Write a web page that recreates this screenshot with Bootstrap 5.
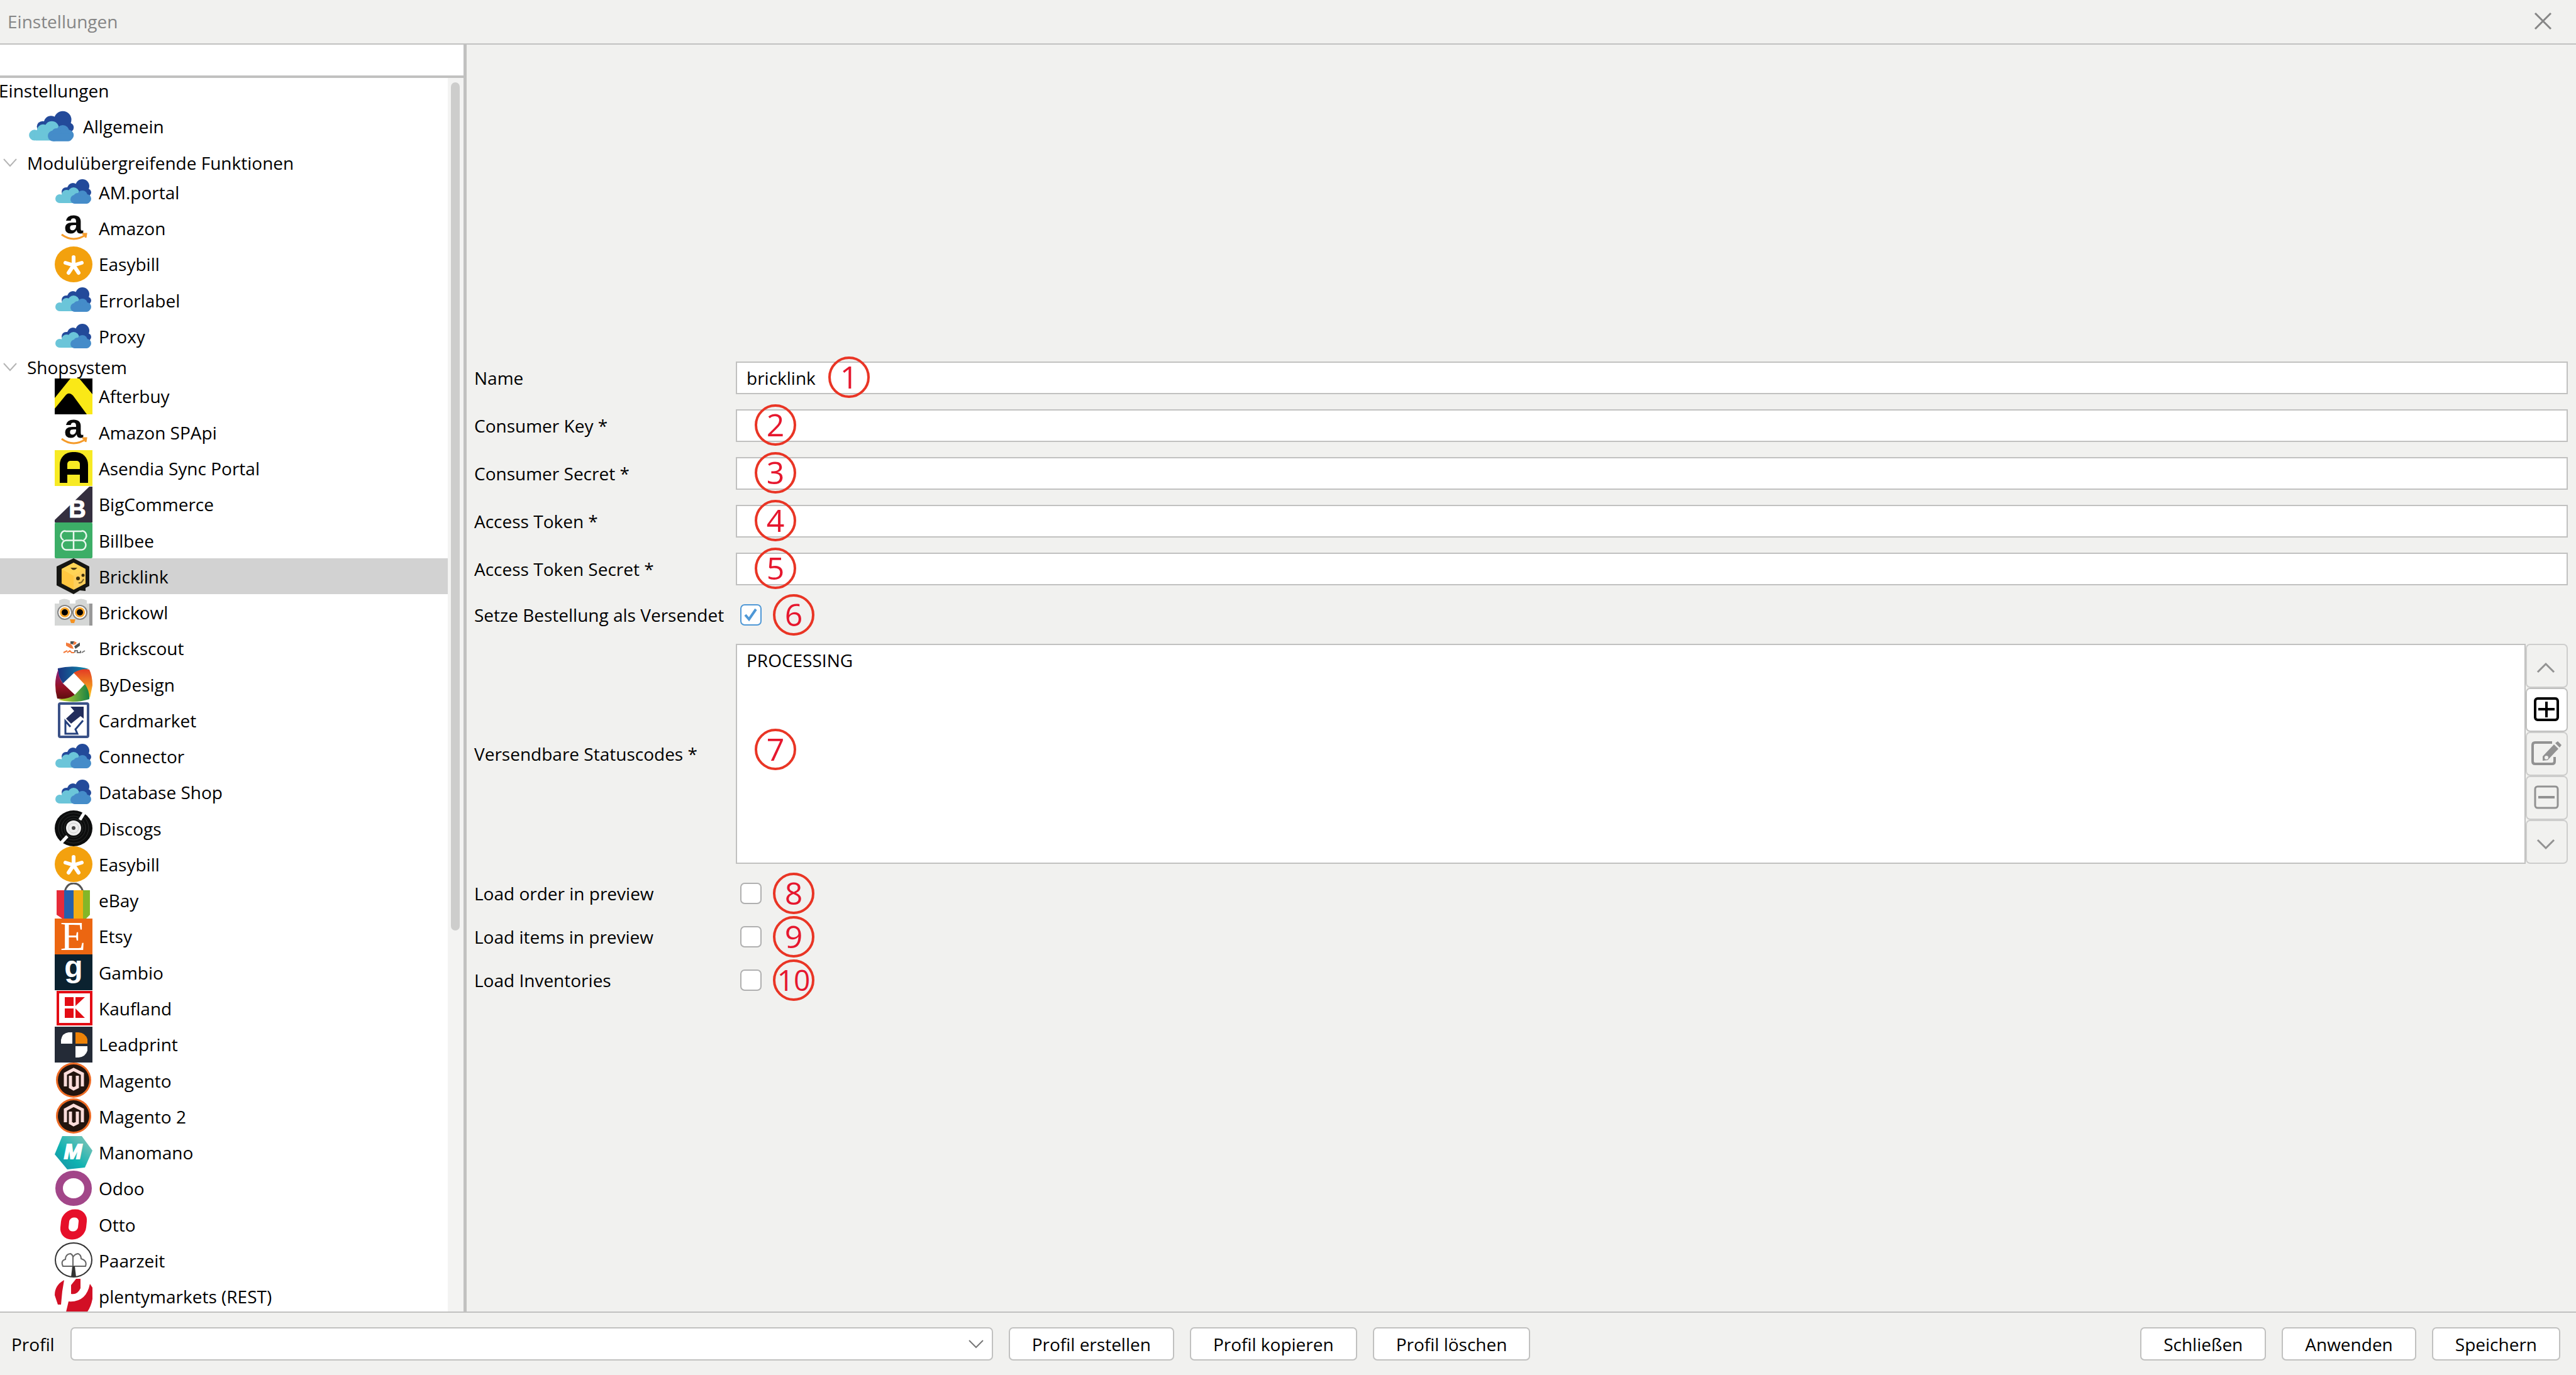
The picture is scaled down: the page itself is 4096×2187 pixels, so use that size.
<!DOCTYPE html>
<html lang="de">
<head>
<meta charset="utf-8">
<meta name="viewport" content="width=device-width, initial-scale=1">
<title>Einstellungen</title>
<link href="https://cdn.jsdelivr.net/npm/bootstrap@5.3.0/dist/css/bootstrap.min.css" rel="stylesheet">
<style>
:root{--line:#c1c1c0;--panel:#f1f1ef}
body{font-family:"Open Sans","Noto Sans",sans-serif;font-size:28px;line-height:36px;color:#000;background:var(--panel)}
.titlebar{height:71px;border-bottom:2px solid var(--line);padding:0 36px 0 12px;color:#868686}
.close-x{width:32px;height:32px;line-height:0}
.sidebar{width:742px;border-right:5px solid var(--line);background:#fff}
.search-box{height:53px;border:0;border-bottom:4px solid var(--line);border-radius:0;font-size:28px;background:#fff}
.tree a{color:#000;text-decoration:none;white-space:nowrap}
.tree ul{display:grid;grid-auto-rows:1fr}
.tree-root{height:39px;margin-left:-2px;padding-top:2px}
.tree-main{height:76px;padding-left:41px}
.tree-main svg{width:78px;height:57px;margin-right:13px}
.tree-group{height:38px;padding:2px 0 0 5px}
.tree-group svg{width:22px;height:22px;margin-right:16px}
.group-modules{height:287px}
.group-shops{height:1489px}
.tree-item{padding-left:87px}
.tree-item svg{width:60px;height:57px;margin-right:10px;flex:none}
.tree-item.selected{background:#d2d2d2}
.track{width:25px;background:#f3f3f2;padding:7px 6px 0 5px}
.thumb{height:69%;border-radius:7px;background:#cdcdcc}
.settings{padding:0 13px 0 12px;gap:24px}
.lbl{width:416px;flex:none}
.field{height:45px}
.box{height:52px;border:2px solid var(--line);border-radius:0;padding:0 15px;font-size:28px;line-height:36px;color:#000;background:#fff}
textarea.box{height:350px;padding:6px 15px;resize:none}
.form-check-input{width:34px;height:34px;margin:0 18px 0 7px;border:2px solid #b0b0b0;border-radius:4px;background-color:#fff;flex:none}
.form-check-input:checked{background-color:#fff;border-color:#4f98d6;background-size:100%;background-image:url("data:image/svg+xml,%3Csvg xmlns='http://www.w3.org/2000/svg' viewBox='0 0 30 30'%3E%3Cpath d='M6 15l6 7L23 6' fill='none' stroke='%234f98d6' stroke-width='4'/%3E%3C/svg%3E")}
.num{width:66px;height:66px;border:4px solid #e93525;border-radius:50%;color:#e6172e;font-size:50px;line-height:57px;text-align:center;flex:none;display:flex;justify-content:center}
.num-two{font-size:46px}
.num-over{position:absolute;left:30px;top:50%;margin-top:-34px}
.num-after{left:147px}
.num-tall{margin-top:-40px}
.side-btns{width:67px}
.side-btns .btn{flex:1;padding:0;border:2px solid #cdcdcc;border-radius:7px;color:#929292;line-height:0;opacity:1;background:transparent}
.side-btns .btn.active-add{background:#fff;border-color:var(--line);color:#000}
.side-btns svg{width:60px;height:50px}
.bottombar{height:101px;border-top:2px solid var(--line);padding:0 25px 0 18px;gap:25px}
.bottombar .btn{height:53px;padding:0 35px;border:2px solid var(--line);border-radius:7px;background:#fff;font-size:28px;line-height:36px;color:#000}
.profile-select{width:1467px;height:53px;border:2px solid var(--line);border-radius:7px;font-size:28px;background-color:#fff;background-size:26px 16px;background-position:right 12px center;background-image:url("data:image/svg+xml,%3Csvg xmlns='http://www.w3.org/2000/svg' viewBox='0 0 26 16'%3E%3Cpath d='M2 2l11 11L24 2' fill='none' stroke='%23777' stroke-width='2'/%3E%3C/svg%3E")}
</style>
<script src="https://cdn.jsdelivr.net/npm/bootstrap@5.3.0/dist/js/bootstrap.bundle.min.js"></script>
</head>
<body class="vh-100 d-flex flex-column overflow-hidden">

<svg class="d-none" aria-hidden="true">
  <symbol id="cloud" viewBox="0 0 60 57">
    <g fill="#234a9a"><circle cx="44" cy="19" r="11"/><circle cx="29" cy="23" r="9"/><circle cx="18" cy="28" r="7"/><circle cx="52" cy="29" r="6"/><rect x="18" y="21" width="36" height="14"/></g>
    <g fill="#6bc5d9"><circle cx="30" cy="30" r="9"/><circle cx="19" cy="33" r="8"/><circle cx="8" cy="39" r="7"/><rect x="8" y="33" width="24" height="13" rx="2"/></g>
    <g fill="#458cc9"><circle cx="44" cy="34" r="8"/><circle cx="51" cy="39" r="7"/><circle cx="32" cy="40" r="7"/><circle cx="36" cy="36" r="6"/><rect x="28" y="37" width="28" height="10" rx="5"/></g>
  </symbol>
  <symbol id="amazon" viewBox="0 0 60 57">
    <text x="30" y="37" text-anchor="middle" font-family="Liberation Sans" font-weight="700" font-size="54" fill="#0a0a0a">a</text>
    <path d="M11 39Q30 53 50 39M44 38l6 0-1 6" fill="none" stroke="#f59b2a" stroke-width="3"/>
  </symbol>
  <symbol id="easybill" viewBox="0 0 60 57">
    <ellipse cx="30" cy="28.500" rx="30" ry="28.500" fill="#f3a10e"/>
    <path d="M30 30V17M30 30l-13-4M30 30l13-4M30 30l-8 12M30 30l8 12" stroke="#fff" stroke-width="6" stroke-linecap="round"/>
  </symbol>
  <symbol id="magento" viewBox="0 0 60 57">
    <circle cx="30" cy="28" r="28" fill="#ec6a24"/><circle cx="30" cy="28" r="25" fill="#22140e"/>
    <path d="M17 38V18L30 11l14 7v20M25 21v18l5 3 6-3V21" fill="none" stroke="#fbdcda" stroke-width="5"/>
  </symbol>
  <symbol id="chev" viewBox="0 0 22 22"><path d="M1 5l10 11L21 5" fill="none" stroke="#b4b4b4" stroke-width="2"/></symbol>
</svg>

<header class="titlebar d-flex align-items-center justify-content-between">
  <span>Einstellungen</span>
  <button type="button" class="close-x btn p-0 border-0" aria-label="Schließen"><svg width="32" height="32" viewBox="0 0 32 32"><path d="M3 3l25 25M28 3L3 28" stroke="#868686" stroke-width="3"/></svg></button>
</header>

<div class="d-flex flex-grow-1 overflow-hidden">
  <aside class="sidebar d-flex flex-column flex-shrink-0 overflow-hidden">
    <input type="search" class="search-box form-control flex-shrink-0" aria-label="Suche">
    <div class="d-flex flex-grow-1 overflow-hidden">
      <nav class="tree flex-grow-1">
        <a href="#" class="tree-root d-flex align-items-center">Einstellungen</a>
        <a href="#" class="tree-main d-flex align-items-center"><svg viewBox="0 0 60 57" preserveAspectRatio="none"><g transform="translate(3 -5) scale(.96 1.230)"><use href="#cloud" width="60" height="57"/></g></svg>Allgemein</a>
        <a href="#" class="tree-group d-flex align-items-center"><svg><use href="#chev"/></svg>Modulübergreifende Funktionen</a>
        <ul class="group-modules list-unstyled m-0">
          <li class="d-grid"><a href="#" class="tree-item d-flex align-items-center"><svg><use href="#cloud"/></svg>AM.portal</a></li>
          <li class="d-grid"><a href="#" class="tree-item d-flex align-items-center"><svg><use href="#amazon"/></svg>Amazon</a></li>
          <li class="d-grid"><a href="#" class="tree-item d-flex align-items-center"><svg><use href="#easybill"/></svg>Easybill</a></li>
          <li class="d-grid"><a href="#" class="tree-item d-flex align-items-center"><svg><use href="#cloud"/></svg>Errorlabel</a></li>
          <li class="d-grid"><a href="#" class="tree-item d-flex align-items-center"><svg><use href="#cloud"/></svg>Proxy</a></li>
        </ul>
        <a href="#" class="tree-group d-flex align-items-center"><svg><use href="#chev"/></svg>Shopsystem</a>
        <ul class="group-shops list-unstyled m-0">
          <li class="d-grid"><a href="#" class="tree-item d-flex align-items-center"><svg viewBox="0 0 60 57"><rect width="60" height="57"/><path d="M25 0H39L60 25V57H51L29 27Q23 21 18 26L0 48V31z" fill="#fae817"/></svg>Afterbuy</a></li>
          <li class="d-grid"><a href="#" class="tree-item d-flex align-items-center"><svg><use href="#amazon"/></svg>Amazon SPApi</a></li>
          <li class="d-grid"><a href="#" class="tree-item d-flex align-items-center"><svg viewBox="0 0 60 57"><rect width="60" height="57" fill="#f7ea24"/><rect x="8" y="3" width="45" height="45" rx="20"/><rect x="8" y="24" width="45" height="28"/><rect x="20" y="17" width="20" height="13" rx="5" fill="#f7ea24"/><rect x="20" y="24" width="20" height="6" fill="#f7ea24"/><rect x="20" y="39" width="20" height="14" fill="#f7ea24"/></svg>Asendia Sync Portal</a></li>
          <li class="d-grid"><a href="#" class="tree-item d-flex align-items-center"><svg viewBox="0 0 60 57"><path d="M60 0V57H0V53L55 0z" fill="#342f3f"/><text x="36" y="49" text-anchor="middle" font-family="Liberation Sans" font-weight="700" font-size="38" fill="#fff" stroke="#fff">B</text></svg>BigCommerce</a></li>
          <li class="d-grid"><a href="#" class="tree-item d-flex align-items-center"><svg viewBox="0 0 60 57"><rect width="60" height="57" rx="2" fill="#3cae67"/><g fill="none" stroke="#e9f7ee" stroke-width="2.500"><path d="M30 14H18a6 7 0 0 0-4 14M30 14H42a6 7 0 0 1 4 14M30 28.500H18a6 7 0 0 0 0 15H43a6 7 0 0 0 0-15H30M30 14V43"/></g></svg>Billbee</a></li>
          <li class="d-grid"><a href="#" class="tree-item selected d-flex align-items-center"><svg viewBox="0 0 60 57"><path d="M30 0L55 13V44L49 47V52L40 51 30 57 3 43V13z" fill="#161613"/><path d="M30 7L49 17V40L30 50 11 40V17z" fill="#ffc640"/><path d="M30 7L49 17 30 28 11 17z" fill="#ffd456"/><path d="M30 28L49 17V40L30 50z" fill="#fdce5b"/><path d="M25 15q5 7 11 0z" fill="#4a3b14"/><circle cx="37" cy="32" r="3" fill="#3a2d0c"/><circle cx="45" cy="27" r="2.500" fill="#3a2d0c"/><path d="M38 39q5 1 8-6" fill="none" stroke="#7a6123" stroke-width="2"/></svg>Bricklink</a></li>
          <li class="d-grid"><a href="#" class="tree-item d-flex align-items-center"><svg viewBox="0 0 60 57"><path d="M0 14H7V9q8-5 17 0v5H33V9q9-5 18 0v5H60V49H0z" fill="#d5d7d6"/><path d="M55 14h5v35h-5z" fill="#999"/><g stroke="#858585" stroke-width="2" fill="#fff"><circle cx="16" cy="28" r="11"/><circle cx="40" cy="28" r="11"/></g><circle cx="16" cy="28" r="8" fill="#f8a62c"/><circle cx="40" cy="28" r="8" fill="#f8a62c"/><circle cx="16" cy="28" r="5"/><circle cx="40" cy="28" r="5"/><path d="M24 39h9l-2 6h-5z" fill="#f59322"/></svg>Brickowl</a></li>
          <li class="d-grid"><a href="#" class="tree-item d-flex align-items-center"><svg viewBox="0 0 60 57"><path d="M18 19l7 2 3 3 2 5-5-1-7-4z" fill="#f37b3c"/><path d="M25 17h6l-2 5-4-1z" fill="#4a5152"/><path d="M31 17l4 2-2 3-4 1z" fill="#f37b3c"/><path d="M40 19v5l-7 5-2-4 4-3z" fill="#4a5152"/><path d="M14 35l6-3M20 35l4-3 3 3h4" stroke="#f37b3c" stroke-width="2" fill="none"/><path d="M32 35v-3h4v3h5v-3M43 35l5-3" stroke="#777" stroke-width="2" fill="none"/></svg>Brickscout</a></li>
          <li class="d-grid"><a href="#" class="tree-item d-flex align-items-center"><svg viewBox="0 0 60 57"><defs><linearGradient id="g1"><stop offset="0" stop-color="#1b3280"/><stop offset="1" stop-color="#0d8fae"/></linearGradient><linearGradient id="g2" x2="0" y2="1"><stop offset="0" stop-color="#e33a24"/><stop offset="1" stop-color="#fbcb1c"/></linearGradient><linearGradient id="g3"><stop offset="0" stop-color="#cfd52d"/><stop offset="1" stop-color="#178244"/></linearGradient><linearGradient id="g4" x2="0" y2="1"><stop offset="0" stop-color="#8c2583"/><stop offset=".6" stop-color="#951226"/><stop offset="1" stop-color="#5d0d0d"/></linearGradient></defs><path d="M5 3Q30-3 54 4L30 11 13 27Q4 14 5 3z" fill="url(#g1)"/><path d="M30 10Q44 2 55 5 60 15 60 30L56 50 48 29z" fill="url(#g2)"/><path d="M48 28Q56 40 55 52 30 60 6 53L32 45z" fill="url(#g3)"/><path d="M6 4Q5 16 13 27L32 45Q18 54 4 51-3 25 6 4z" fill="url(#g4)"/></svg>ByDesign</a></li>
          <li class="d-grid"><a href="#" class="tree-item d-flex align-items-center"><svg viewBox="0 0 60 57"><rect x="7" y="2" width="46" height="53" rx="2" fill="#fff" stroke="#3b5288" stroke-width="4"/><path d="M25 7H46V26L41 22 26 34 18 26 31 14z" fill="#222d5c"/><path d="M45 29L33 43l3 7H17V30l8 9" fill="none" stroke="#24407c" stroke-width="3"/></svg>Cardmarket</a></li>
          <li class="d-grid"><a href="#" class="tree-item d-flex align-items-center"><svg><use href="#cloud"/></svg>Connector</a></li>
          <li class="d-grid"><a href="#" class="tree-item d-flex align-items-center"><svg><use href="#cloud"/></svg>Database Shop</a></li>
          <li class="d-grid"><a href="#" class="tree-item d-flex align-items-center"><svg viewBox="0 0 60 57"><ellipse cx="30" cy="28.500" rx="30" ry="28.500" fill="#0c0d0d"/><g fill="none" stroke="#2c2e2e"><circle cx="30" cy="28" r="24"/><circle cx="30" cy="28" r="19"/><circle cx="30" cy="28" r="15"/></g><path d="M40 15L48 2M20 41L8 54" stroke="#fff" stroke-width="5"/><circle cx="30" cy="28" r="12" fill="#eee"/><circle cx="30" cy="28" r="8" fill="none" stroke="#ccc"/><circle cx="30" cy="28" r="3" fill="#444"/></svg>Discogs</a></li>
          <li class="d-grid"><a href="#" class="tree-item d-flex align-items-center"><svg><use href="#easybill"/></svg>Easybill</a></li>
          <li class="d-grid"><a href="#" class="tree-item d-flex align-items-center"><svg viewBox="0 0 60 57"><path d="M16 14Q19 1 30 1T45 14" fill="none" stroke="#555" stroke-width="3"/><path d="M3 12H16V57H12L3 51z" fill="#e62b39"/><path d="M15 12H30V57H15z" fill="#2660ab"/><path d="M30 12H45V57H30z" fill="#f3ad13"/><path d="M45 12H56V51L50 57H45z" fill="#84b728"/></svg>eBay</a></li>
          <li class="d-grid"><a href="#" class="tree-item d-flex align-items-center"><svg viewBox="0 0 60 57"><rect width="60" height="57" fill="#ec6611"/><text x="29" y="50" text-anchor="middle" font-family="Liberation Serif" font-size="66" fill="#fff">E</text></svg>Etsy</a></li>
          <li class="d-grid"><a href="#" class="tree-item d-flex align-items-center"><svg viewBox="0 0 60 57"><rect width="60" height="57" fill="#0b2230"/><text x="30" y="36" text-anchor="middle" font-family="Liberation Sans" font-weight="700" font-size="48" fill="#fff">g</text></svg>Gambio</a></li>
          <li class="d-grid"><a href="#" class="tree-item d-flex align-items-center"><svg viewBox="0 0 60 57"><rect x="5" y="2" width="53" height="51" fill="#fff" stroke="#e30c14" stroke-width="4"/><path d="M16 10H30V24H16zM33 10H48L33 24zM16 28H30V43H16zM33 28L48 43H33z" fill="#e30c14"/></svg>Kaufland</a></li>
          <li class="d-grid"><a href="#" class="tree-item d-flex align-items-center"><svg viewBox="0 0 60 57"><rect width="60" height="57" fill="#242b37"/><path d="M10 27V21Q12 10 22 9H28V27zM33 31H52V38Q49 48 38 49H33z" fill="#fff"/><path d="M33 9H38Q49 10 52 20V27H33z" fill="#ee8207"/></svg>Leadprint</a></li>
          <li class="d-grid"><a href="#" class="tree-item d-flex align-items-center"><svg><use href="#magento"/></svg>Magento</a></li>
          <li class="d-grid"><a href="#" class="tree-item d-flex align-items-center"><svg><use href="#magento"/></svg>Magento 2</a></li>
          <li class="d-grid"><a href="#" class="tree-item d-flex align-items-center"><svg viewBox="0 0 60 57"><defs><linearGradient id="g5" x1="0" y1="1" x2="1" y2="0"><stop offset="0" stop-color="#1c8da4"/><stop offset=".4" stop-color="#0fb2b1"/><stop offset=".8" stop-color="#66c0b6"/></linearGradient></defs><path d="M12 2H43L60 25 48 52 20 55 0 31z" fill="url(#g5)"/><text x="29" y="38" text-anchor="middle" font-family="Liberation Sans" font-weight="700" font-style="italic" font-size="34" fill="#fff" stroke="#fff" stroke-width="2">M</text></svg>Manomano</a></li>
          <li class="d-grid"><a href="#" class="tree-item d-flex align-items-center"><svg viewBox="0 0 60 57"><ellipse cx="30" cy="28" rx="23" ry="22" fill="none" stroke="#a24689" stroke-width="12"/></svg>Odoo</a></li>
          <li class="d-grid"><a href="#" class="tree-item d-flex align-items-center"><svg viewBox="0 0 60 57"><g transform="skewX(-6) translate(3 0)"><rect x="16" y="11" width="28" height="35" rx="13" fill="none" stroke="#e60f2a" stroke-width="13"/></g></svg>Otto</a></li>
          <li class="d-grid"><a href="#" class="tree-item d-flex align-items-center"><svg viewBox="0 0 60 57"><ellipse cx="30" cy="28" rx="29" ry="27" fill="#fff" stroke="#333" stroke-width="2"/><path d="M29 38H13Q9 29 17 27 17 19 25 18q4 2 4 6 2-5 8-6 5 2 5 8 10 3 7 12H30M29 24V38" fill="none" stroke="#666" stroke-width="2"/><path d="M28 38h4l2 17h-8z" fill="#333"/></svg>Paarzeit</a></li>
          <li class="d-grid"><a href="#" class="tree-item d-flex align-items-center"><svg viewBox="0 0 60 57"><g fill="#d20f25"><path d="M15 2Q0 10 0 26L5 41H10L12 20z"/><path d="M34 0H41V15Q36 26 26 24V10z"/><path d="M56 8L60 14V32Q57 48 48 57H17L22 36Q50 38 56 8z"/></g></svg>plentymarkets (REST)</a></li>
        </ul>
      </nav>
      <div class="track flex-shrink-0"><div class="thumb"></div></div>
    </div>
  </aside>

  <main class="settings flex-grow-1 d-flex flex-column justify-content-center">
    <div class="d-flex align-items-center"><label class="lbl" for="f1">Name</label><div class="position-relative flex-grow-1"><input id="f1" class="box form-control" value="bricklink"><span class="num num-over num-after">1</span></div></div>
    <div class="d-flex align-items-center"><label class="lbl" for="f2">Consumer Key *</label><div class="position-relative flex-grow-1"><input id="f2" class="box form-control"><span class="num num-over">2</span></div></div>
    <div class="d-flex align-items-center"><label class="lbl" for="f3">Consumer Secret *</label><div class="position-relative flex-grow-1"><input id="f3" class="box form-control"><span class="num num-over">3</span></div></div>
    <div class="d-flex align-items-center"><label class="lbl" for="f4">Access Token *</label><div class="position-relative flex-grow-1"><input id="f4" class="box form-control"><span class="num num-over">4</span></div></div>
    <div class="d-flex align-items-center"><label class="lbl" for="f5">Access Token Secret *</label><div class="position-relative flex-grow-1"><input id="f5" class="box form-control"><span class="num num-over">5</span></div></div>
    <div class="field d-flex align-items-center"><label class="lbl" for="f6">Setze Bestellung als Versendet</label><input id="f6" type="checkbox" class="form-check-input" checked><span class="num">6</span></div>
    <div class="d-flex align-items-center"><label class="lbl" for="f7">Versendbare Statuscodes *</label>
      <div class="position-relative flex-grow-1"><textarea id="f7" class="box form-control">PROCESSING</textarea><span class="num num-over num-tall">7</span></div>
      <div class="side-btns d-flex flex-column align-self-stretch">
        <button type="button" class="btn" disabled aria-label="Nach oben"><svg viewBox="0 0 60 50"><path d="M15 35L28 22 41 35" fill="none" stroke="currentColor" stroke-width="3"/></svg></button>
        <button type="button" class="btn active-add" aria-label="Hinzufügen"><svg viewBox="0 0 60 50"><rect x="11" y="7" width="36" height="34" rx="4" fill="none" stroke="currentColor" stroke-width="4"/><path d="M16 24H42M29 12V37" stroke="currentColor" stroke-width="4"/></svg></button>
        <button type="button" class="btn" disabled aria-label="Bearbeiten"><svg viewBox="0 0 60 50"><path d="M38 7H11q-4 0-4 4V37q0 4 4 4H38q4 0 4-4V30" fill="none" stroke="currentColor" stroke-width="4"/><path d="M23 36V29L41 10 48 17 31 35zM43 8l4-3 6 6-3 4z" fill="currentColor"/><circle cx="29" cy="31" r="3" fill="#f1f1ef"/></svg></button>
        <button type="button" class="btn" disabled aria-label="Entfernen"><svg viewBox="0 0 60 50"><rect x="11" y="7" width="36" height="34" rx="4" fill="none" stroke="currentColor" stroke-width="3"/><path d="M16 24H42" stroke="currentColor" stroke-width="4"/></svg></button>
        <button type="button" class="btn" disabled aria-label="Nach unten"><svg viewBox="0 0 60 50"><path d="M15 22L28 35 41 22" fill="none" stroke="currentColor" stroke-width="3"/></svg></button>
      </div>
    </div>
    <div class="field d-flex align-items-center"><label class="lbl" for="f8">Load order in preview</label><input id="f8" type="checkbox" class="form-check-input"><span class="num">8</span></div>
    <div class="field d-flex align-items-center"><label class="lbl" for="f9">Load items in preview</label><input id="f9" type="checkbox" class="form-check-input"><span class="num">9</span></div>
    <div class="field d-flex align-items-center"><label class="lbl" for="f10">Load Inventories</label><input id="f10" type="checkbox" class="form-check-input"><span class="num num-two">10</span></div>
  </main>
</div>

<footer class="bottombar d-flex align-items-center flex-shrink-0">
  <label for="profil">Profil</label>
  <select id="profil" class="profile-select form-select"><option></option></select>
  <button type="button" class="btn">Profil erstellen</button>
  <button type="button" class="btn">Profil kopieren</button>
  <button type="button" class="btn">Profil löschen</button>
  <button type="button" class="btn ms-auto">Schließen</button>
  <button type="button" class="btn">Anwenden</button>
  <button type="button" class="btn">Speichern</button>
</footer>
</body>
</html>
